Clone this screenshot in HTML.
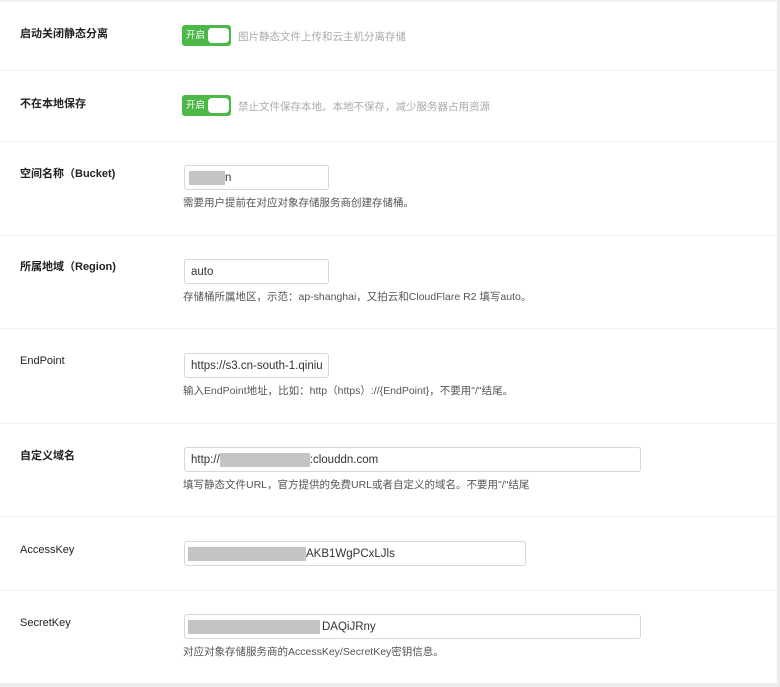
<!DOCTYPE html>
<html><head><meta charset="utf-8"><style>
*{margin:0;padding:0;box-sizing:border-box}
body{width:780px;height:687px;background:#fff;position:relative;overflow:hidden;font-family:"Liberation Sans","Noto Sans CJK SC",sans-serif;color:#222}
.edge{position:absolute;left:777px;top:0;width:3px;height:687px;background:#ececec}
.top{position:absolute;left:0;top:0;width:777px;height:2px;background:#f0f0f0}
.sep{position:absolute;left:0;width:777px;height:1px;background:#f0f0f0}
.lab{position:absolute;left:20px;font-size:11px;line-height:14px}
.b{font-weight:bold}
.tg{position:absolute;left:182px;width:49px;height:21px;background:#4cb848;border-radius:3px}
.tg span{position:absolute;left:4px;top:5px;color:#fff;font-size:9.5px;line-height:12px}
.tg i{position:absolute;left:26px;top:3px;width:21px;height:15px;background:#fff;border-radius:4px}
.tt{position:absolute;left:238px;font-size:10.5px;color:#aaa;line-height:14px}
.in{position:absolute;left:184px;height:25px;border:1px solid #d8d8d8;border-radius:3px;font-size:11.5px;line-height:25px;padding-left:6px;color:#333;white-space:nowrap;overflow:hidden}
.m{display:inline-block;background:#c4c4c4;height:14px;vertical-align:middle}
.h{position:absolute;left:183px;font-size:10.5px;color:#555;line-height:14px}
</style></head><body>
<div class="top"></div><div class="edge"></div>
<div class="sep" style="top:70px"></div>
<div class="sep" style="top:141px"></div>
<div class="sep" style="top:235px"></div>
<div class="sep" style="top:328px"></div>
<div class="sep" style="top:423px"></div>
<div class="sep" style="top:516px"></div>
<div class="sep" style="top:590px"></div>
<div class="sep" style="top:683px;height:4px;background:#ececec"></div>

<div class="lab b" style="top:27px">启动关闭静态分离</div>
<div class="tg" style="top:25px"><span>开启</span><i></i></div>
<div class="tt" style="top:30px">图片静态文件上传和云主机分离存储</div>

<div class="lab b" style="top:97px">不在本地保存</div>
<div class="tg" style="top:95px"><span>开启</span><i></i></div>
<div class="tt" style="top:100px">禁止文件保存本地。本地不保存，减少服务器占用资源</div>

<div class="lab b" style="top:167px">空间名称（Bucket)</div>
<div class="in" style="top:165px;width:145px"><span class="m" style="width:36px;margin-left:-2px"></span>n</div>
<div class="h" style="top:196px">需要用户提前在对应对象存储服务商创建存储桶。</div>

<div class="lab b" style="top:260px">所属地域（Region)</div>
<div class="in" style="top:259px;width:145px">auto</div>
<div class="h" style="top:290px">存储桶所属地区，示范：ap-shanghai，又拍云和CloudFlare R2 填写auto。</div>

<div class="lab" style="top:354px">EndPoint</div>
<div class="in" style="top:353px;width:145px">https://s3.cn-south-1.qiniu</div>
<div class="h" style="top:384px">输入EndPoint地址，比如：http（https）://{EndPoint}，不要用"/"结尾。</div>

<div class="lab b" style="top:449px">自定义域名</div>
<div class="in" style="top:447px;width:457px">http://<span class="m" style="width:90px"></span>:clouddn.com</div>
<div class="h" style="top:478px">填写静态文件URL，官方提供的免费URL或者自定义的域名。不要用"/"结尾</div>

<div class="lab" style="top:543px">AccessKey</div>
<div class="in" style="top:541px;width:342px"><span class="m" style="width:118px;margin-left:-3px"></span>AKB1WgPCxLJls</div>

<div class="lab" style="top:616px">SecretKey</div>
<div class="in" style="top:614px;width:457px"><span class="m" style="width:132px;margin-left:-3px;margin-right:2px"></span>DAQiJRny</div>
<div class="h" style="top:645px">对应对象存储服务商的AccessKey/SecretKey密钥信息。</div>
</body></html>
